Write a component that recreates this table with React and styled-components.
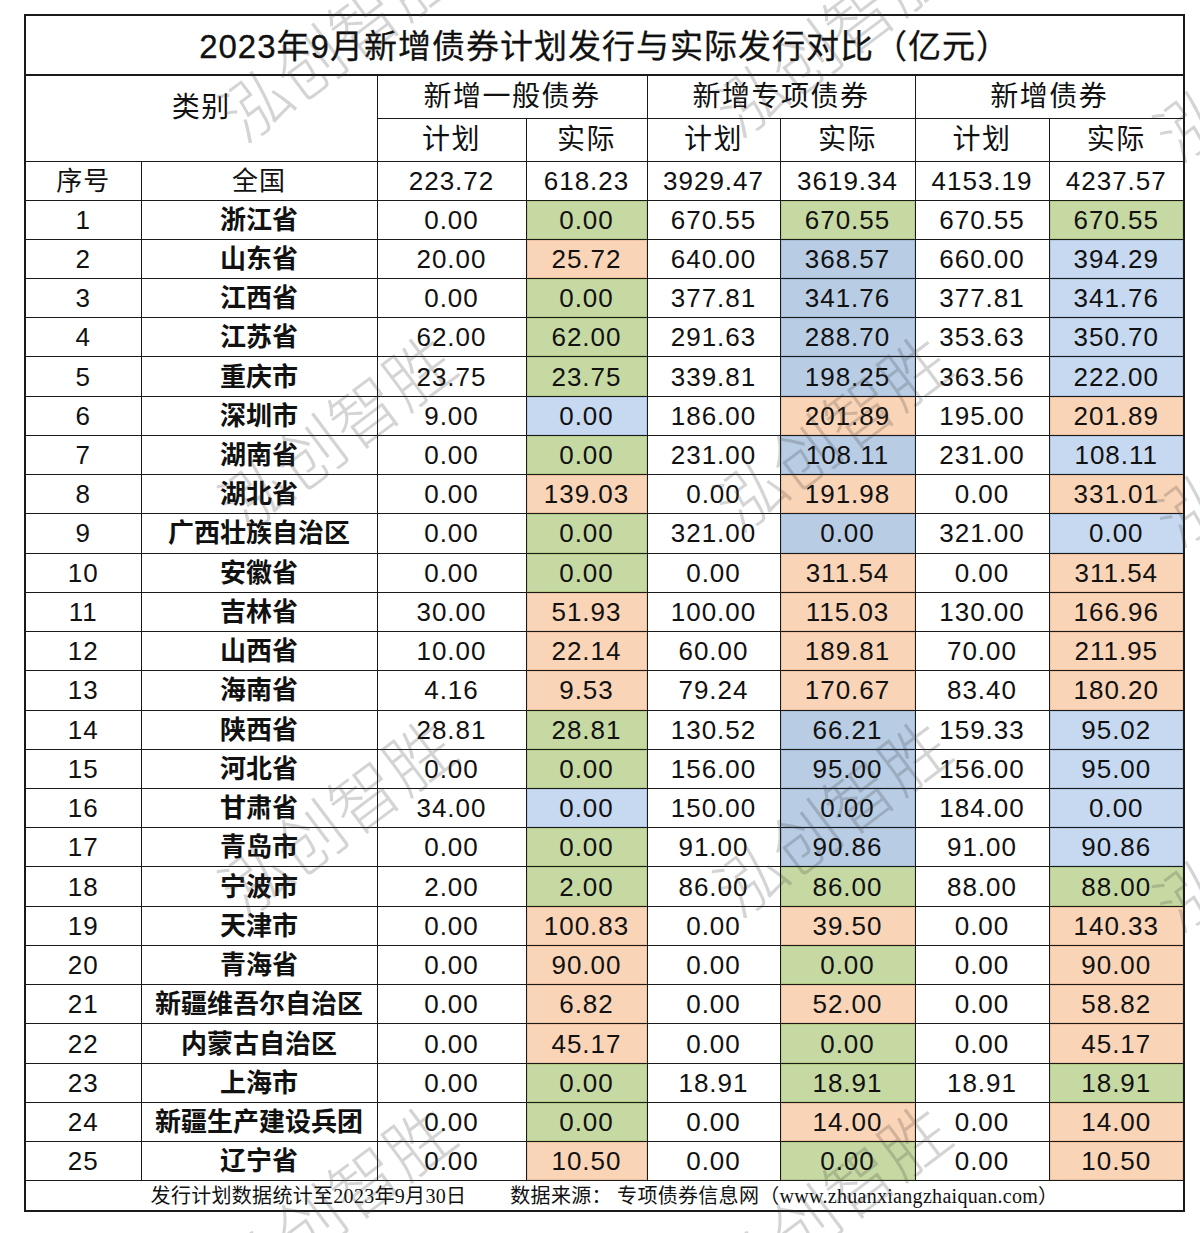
import React from 'react';
import styled, { createGlobalStyle } from 'styled-components';

const GlobalStyle = createGlobalStyle`
	html, body {
		margin: 0;
		padding: 0;
		background: #fff;
	}
	body {
		font-family: 'Liberation Sans', 'Noto Sans CJK SC', sans-serif;
		color: #111;
	}
`;

const fills = {
	g: { bg: '#c6d9a2', edge: '#b4cb8c' },
	o: { bg: '#fad4b6', edge: '#eec2a0' },
	b: { bg: '#c6d9f0', edge: '#b2c8e2' },
	d: { bg: '#b8cce4', edge: '#a6bdd9' },
};

const rows = [
	['浙江省', '0.00', '0.00', 'g', '670.55', '670.55', 'g', '670.55', '670.55', 'g'],
	['山东省', '20.00', '25.72', 'o', '640.00', '368.57', 'd', '660.00', '394.29', 'b'],
	['江西省', '0.00', '0.00', 'g', '377.81', '341.76', 'd', '377.81', '341.76', 'b'],
	['江苏省', '62.00', '62.00', 'g', '291.63', '288.70', 'd', '353.63', '350.70', 'b'],
	['重庆市', '23.75', '23.75', 'g', '339.81', '198.25', 'd', '363.56', '222.00', 'b'],
	['深圳市', '9.00', '0.00', 'b', '186.00', '201.89', 'o', '195.00', '201.89', 'o'],
	['湖南省', '0.00', '0.00', 'g', '231.00', '108.11', 'd', '231.00', '108.11', 'b'],
	['湖北省', '0.00', '139.03', 'o', '0.00', '191.98', 'o', '0.00', '331.01', 'o'],
	['广西壮族自治区', '0.00', '0.00', 'g', '321.00', '0.00', 'd', '321.00', '0.00', 'b'],
	['安徽省', '0.00', '0.00', 'g', '0.00', '311.54', 'o', '0.00', '311.54', 'o'],
	['吉林省', '30.00', '51.93', 'o', '100.00', '115.03', 'o', '130.00', '166.96', 'o'],
	['山西省', '10.00', '22.14', 'o', '60.00', '189.81', 'o', '70.00', '211.95', 'o'],
	['海南省', '4.16', '9.53', 'o', '79.24', '170.67', 'o', '83.40', '180.20', 'o'],
	['陕西省', '28.81', '28.81', 'g', '130.52', '66.21', 'd', '159.33', '95.02', 'b'],
	['河北省', '0.00', '0.00', 'g', '156.00', '95.00', 'd', '156.00', '95.00', 'b'],
	['甘肃省', '34.00', '0.00', 'b', '150.00', '0.00', 'd', '184.00', '0.00', 'b'],
	['青岛市', '0.00', '0.00', 'g', '91.00', '90.86', 'd', '91.00', '90.86', 'b'],
	['宁波市', '2.00', '2.00', 'g', '86.00', '86.00', 'g', '88.00', '88.00', 'g'],
	['天津市', '0.00', '100.83', 'o', '0.00', '39.50', 'o', '0.00', '140.33', 'o'],
	['青海省', '0.00', '90.00', 'o', '0.00', '0.00', 'g', '0.00', '90.00', 'o'],
	['新疆维吾尔自治区', '0.00', '6.82', 'o', '0.00', '52.00', 'o', '0.00', '58.82', 'o'],
	['内蒙古自治区', '0.00', '45.17', 'o', '0.00', '0.00', 'g', '0.00', '45.17', 'o'],
	['上海市', '0.00', '0.00', 'g', '18.91', '18.91', 'g', '18.91', '18.91', 'g'],
	['新疆生产建设兵团', '0.00', '0.00', 'g', '0.00', '14.00', 'o', '0.00', '14.00', 'o'],
	['辽宁省', '0.00', '10.50', 'o', '0.00', '0.00', 'g', '0.00', '10.50', 'o'],
];

// watermark centres, as placed on the source image
const marks = [
	[-150, 40], [335, 40], [830, 35], [1270, 60],
	[-150, 430], [335, 430], [830, 430], [1270, 445],
	[-150, 815], [335, 815], [830, 815], [1270, 830],
	[-150, 1200], [335, 1200], [830, 1200],
];

const colWidths = [116, 236, 149, 121, 133, 135, 134, 135];

export default function App() {
	return (
		<>
			<GlobalStyle />
			<Page>
				<Sheet>
					<colgroup>
						{colWidths.map((w, i) => (
							<col key={i} style={{ width: w }} />
						))}
					</colgroup>
					<tbody>
						<Row $h={60}>
							<Title colSpan={8}>2023年9月新增债券计划发行与实际发行对比（亿元）</Title>
						</Row>
						<Row $h={43}>
							<Head colSpan={2} rowSpan={2}>
								<Shift>类别</Shift>
							</Head>
							<Head colSpan={2}>新增一般债券</Head>
							<Head colSpan={2}>新增专项债券</Head>
							<Head colSpan={2}>新增债券</Head>
						</Row>
						<Row $h={43}>
							<Head>计划</Head>
							<Head>实际</Head>
							<Head>计划</Head>
							<Head>实际</Head>
							<Head>计划</Head>
							<Head>实际</Head>
						</Row>
						<Row $h={39}>
							<Cell>序号</Cell>
							<Cell>全国</Cell>
							<Cell>223.72</Cell>
							<Cell>618.23</Cell>
							<Cell>3929.47</Cell>
							<Cell>3619.34</Cell>
							<Cell>4153.19</Cell>
							<Cell>4237.57</Cell>
						</Row>
						{rows.map((r, i) => (
							<Row $h={39.24} key={i}>
								<Cell>{i + 1}</Cell>
								<Cell $bold>{r[0]}</Cell>
								<Cell>{r[1]}</Cell>
								<Cell $fill={r[3]}>{r[2]}</Cell>
								<Cell>{r[4]}</Cell>
								<Cell $fill={r[6]}>{r[5]}</Cell>
								<Cell>{r[7]}</Cell>
								<Cell $fill={r[9]}>{r[8]}</Cell>
							</Row>
						))}
						<Row $h={30}>
							<Foot colSpan={8}>
								<span>发行计划数据统计至2023年9月30日</span>
								<span>数据来源：&nbsp;专项债券信息网（www.zhuanxiangzhaiquan.com）</span>
							</Foot>
						</Row>
					</tbody>
				</Sheet>
				<Marks>
					{marks.map(([x, y], i) => (
						<Mark key={i} style={{ left: x - 160, top: y - 45 }}>
							泓创智胜
						</Mark>
					))}
				</Marks>
			</Page>
		</>
	);
}

const Page = styled.div`
	position: relative;
	width: 1200px;
	height: 1233px;
	overflow: hidden;
	padding: 14px 0 0 24px;
	box-sizing: border-box;
`;

const Sheet = styled.table`
	border-collapse: collapse;
	table-layout: fixed;
	width: 1159px;
	border: 2px solid #1a1a1a;
`;

const Row = styled.tr`
	height: ${(p) => p.$h}px;
`;

const Cell = styled.td`
	border: 1px solid #1a1a1a;
	padding: 0;
	text-align: center;
	vertical-align: middle;
	font-size: 26px;
	font-weight: ${(p) => (p.$bold ? 700 : 400)};
	letter-spacing: ${(p) => (p.$bold ? 0 : 1)}px;
	line-height: 1;
	white-space: nowrap;
	background: ${(p) => (p.$fill ? fills[p.$fill].bg : '#fff')};
	box-shadow: ${(p) =>
		p.$fill ? `inset 0 0 0 1px ${fills[p.$fill].edge}` : 'none'};
`;

const Head = styled(Cell)`
	font-size: 28px;
	letter-spacing: 1.5px;
`;

const Title = styled(Cell)`
	font-size: 33px;
	letter-spacing: 1px;
	border-bottom: 2px solid #1a1a1a;
	padding-top: 2px;
	-webkit-text-stroke: 0.3px #111;
`;

const Shift = styled.span`
	display: inline-block;
	transform: translateY(-10px);
`;

const Foot = styled(Cell)`
	font-family: 'Liberation Serif', 'Noto Sans CJK SC', serif;
	font-size: 20px;
	letter-spacing: 0.3px;

	& > span + span {
		margin-left: 44px;
	}
`;

const Marks = styled.div`
	position: absolute;
	inset: 0;
	pointer-events: none;
`;

const Mark = styled.span`
	position: absolute;
	width: 320px;
	height: 90px;
	line-height: 90px;
	text-align: center;
	font-family: 'Noto Sans CJK SC', sans-serif;
	font-size: 68px;
	font-weight: 300;
	letter-spacing: 0;
	color: rgba(60, 60, 60, 0.22);
	transform: rotate(-37deg);
	white-space: nowrap;
`;
